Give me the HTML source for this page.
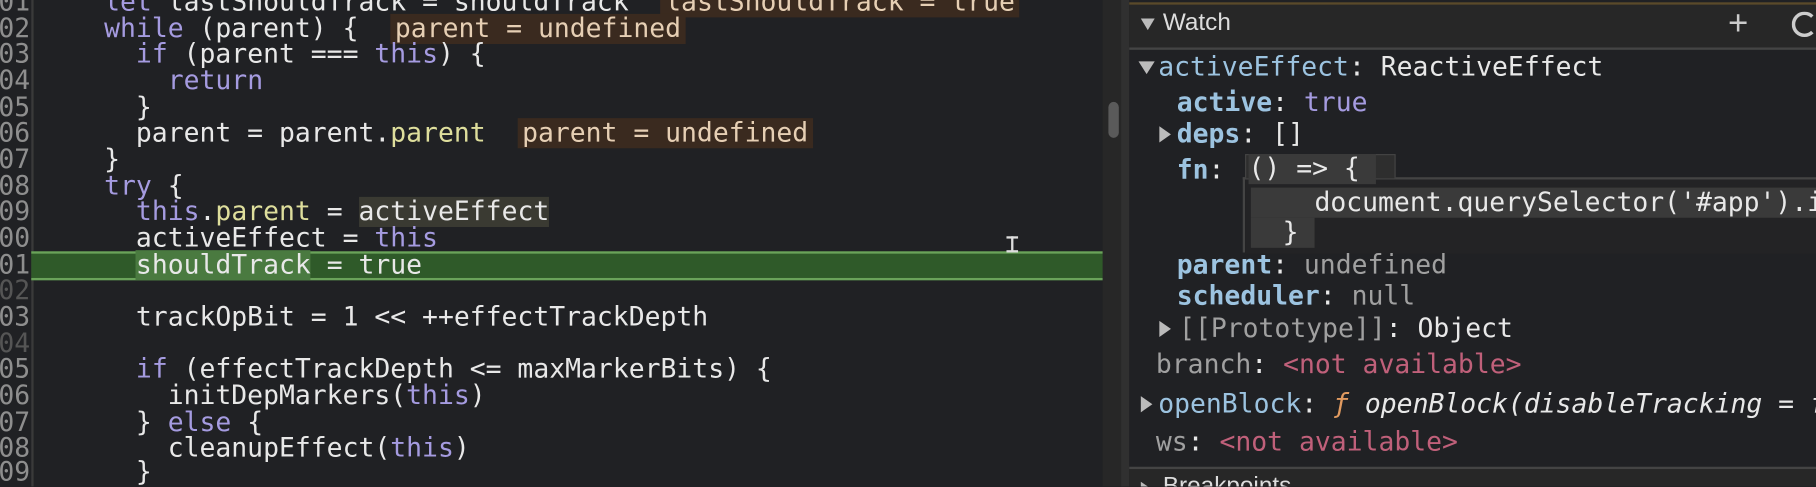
<!DOCTYPE html>
<html><head><meta charset="utf-8"><style>
*{margin:0;padding:0;box-sizing:border-box}
html,body{width:1816px;height:487px;overflow:hidden;background:#202124}
#w{position:absolute;left:0;top:0;width:1568px;height:420px;transform:scale(1.1582);transform-origin:0 0;overflow:hidden;background:#202124;font-family:"DejaVu Sans Mono","Liberation Mono",monospace;font-size:22.8px;color:#e8e8e8}
.ln{position:absolute;left:-6px;width:32px;text-align:right;color:#8e8e8e;height:23px;line-height:23px}
.cl{position:absolute;left:35px;white-space:pre;height:23px;line-height:23px}
.k{color:#a59be0}.p{color:#dede9c}.an{background:#3a2a1f;color:#e6cfb4;padding:0 4px}
.gut{position:absolute;left:27px;top:0;width:2px;height:420px;background:#3a3a3a}
.green{position:absolute;left:27px;top:217px;width:926px;height:25px;background:#2f5a29;border-top:2px solid #6aa35a;border-bottom:2px solid #6aa35a}
.sb{position:absolute;left:952px;top:0;width:18px;height:420px;background:#272727}
.thumb{position:absolute;left:957px;top:88px;width:9px;height:31px;background:#5a5a5a;border-radius:5px}
.div{position:absolute;left:968px;top:0;width:7px;height:420px;background:#303030}
.rp{position:absolute;left:975px;top:0;width:593px;height:420px;background:#202124}
.hdr{position:absolute;left:975px;top:2px;width:593px;height:41px;background:#272727;border-bottom:2px solid #444;border-top:2px solid #5a4a2a}
.rr{position:absolute;white-space:pre;height:26px;line-height:26px}
.pn{color:#9cc3e0;font-weight:bold}.nm{color:#9cc3e0}.g{color:#a0a0a0}.na{color:#c0607a}
.tri{position:absolute;width:0;height:0}
</style></head><body><div id="w">
<div class="gut"></div>
<div class="green"></div>
<div class="ln" style="top:-9px">01</div>
<div class="ln" style="top:14px">02</div>
<div class="ln" style="top:36px">03</div>
<div class="ln" style="top:59px">04</div>
<div class="ln" style="top:82px">05</div>
<div class="ln" style="top:104px">06</div>
<div class="ln" style="top:127px">07</div>
<div class="ln" style="top:150px">08</div>
<div class="ln" style="top:172px">09</div>
<div class="ln" style="top:195px">00</div>
<div class="ln" style="top:218px">01</div>
<div class="ln" style="top:240px;color:#555">02</div>
<div class="ln" style="top:263px">03</div>
<div class="ln" style="top:286px;color:#555">04</div>
<div class="ln" style="top:308px">05</div>
<div class="ln" style="top:331px">06</div>
<div class="ln" style="top:354px">07</div>
<div class="ln" style="top:376px">08</div>
<div class="ln" style="top:397px">09</div>

<div class="cl" style="top:-9px">    <span class="k">let</span> lastShouldTrack = shouldTrack  <span class="an">lastShouldTrack = true</span></div>
<div class="cl" style="top:14px">    <span class="k">while</span> (parent) {  <span class="an">parent = undefined</span></div>
<div class="cl" style="top:36px">      <span class="k">if</span> (parent === <span class="k">this</span>) {</div>
<div class="cl" style="top:59px">        <span class="k">return</span></div>
<div class="cl" style="top:82px">      }</div>
<div class="cl" style="top:104px">      parent = parent.<span class="p">parent</span>  <span class="an">parent = undefined</span></div>
<div class="cl" style="top:127px">    }</div>
<div class="cl" style="top:150px">    <span class="k">try</span> {</div>
<div class="cl" style="top:172px">      <span class="k">this</span>.<span class="p">parent</span> = <span style="background:#3a3a32">activeEffect</span></div>
<div class="cl" style="top:195px">      activeEffect = <span class="k">this</span></div>
<div class="cl" style="top:218px">      <span style="background:#4a7a40">shouldTrack</span> = true</div>
<div class="cl" style="top:263px">      trackOpBit = 1 &lt;&lt; ++effectTrackDepth</div>
<div class="cl" style="top:308px">      <span class="k">if</span> (effectTrackDepth &lt;= maxMarkerBits) {</div>
<div class="cl" style="top:331px">        initDepMarkers(<span class="k">this</span>)</div>
<div class="cl" style="top:354px">      } <span class="k">else</span> {</div>
<div class="cl" style="top:376px">        cleanupEffect(<span class="k">this</span>)</div>
<div class="cl" style="top:397px">      }</div>
<div style="position:absolute;left:873px;top:204px;width:2px;height:14px;background:#ddd"></div>
<div style="position:absolute;left:869px;top:204px;width:10px;height:2px;background:#ddd"></div>
<div style="position:absolute;left:869px;top:216px;width:10px;height:2px;background:#ddd"></div>

<div class="sb"></div><div class="thumb"></div><div class="div"></div>
<div class="rp"></div>
<div class="hdr"></div>
<div class="tri" style="left:985px;top:16px;border-left:6px solid transparent;border-right:6px solid transparent;border-top:10px solid #bbb"></div>
<div style="position:absolute;left:1004px;top:5px;font-family:'Liberation Sans',sans-serif;font-size:21px;line-height:30px;color:#ddd">Watch</div>
<div style="position:absolute;left:1492px;top:1px;font-family:'Liberation Sans',sans-serif;font-size:30px;line-height:40px;color:#ccc">+</div>
<div style="position:absolute;left:1547px;top:10px;width:22px;height:22px;border:3px solid #ccc;border-right-color:transparent;border-radius:50%"></div>

<div class="tri" style="left:983px;top:53px;border-left:7px solid transparent;border-right:7px solid transparent;border-top:11px solid #bbb"></div>
<div class="rr" style="left:1000px;top:45px"><span class="nm">activeEffect</span>: ReactiveEffect</div>
<div class="rr" style="left:1016px;top:76px"><span class="pn">active</span>: <span class="k">true</span></div>
<div class="tri" style="left:1001px;top:109px;border-top:7px solid transparent;border-bottom:7px solid transparent;border-left:10px solid #bbb"></div>
<div class="rr" style="left:1016px;top:103px"><span class="pn">deps</span>: []</div>
<div class="rr" style="left:1016px;top:134px"><span class="pn">fn</span>:</div>
<div style="position:absolute;left:1073px;top:153px;width:495px;height:65px;border-left:2px solid #444;border-top:2px solid #444;background:#1f1f21"></div>
<div style="position:absolute;left:1075px;top:133px;width:130px;height:22px;background:#2e2e2e;border:1px solid #444"></div>
<div style="position:absolute;left:1075px;top:155px;width:493px;height:64px;background:#232325"></div>
<div class="rr" style="left:1078px;top:133px;background:#3a3a3a">() =&gt; { </div>
<div class="rr" style="left:1080px;top:162px;background:#3a3a3a">    document.querySelector('#app').innerHTML</div>
<div class="rr" style="left:1080px;top:188px;background:#3a3a3a">  } </div>
<div class="rr" style="left:1016px;top:216px"><span class="pn">parent</span>: <span class="g">undefined</span></div>
<div class="rr" style="left:1016px;top:243px"><span class="pn">scheduler</span>: <span class="g">null</span></div>
<div class="tri" style="left:1001px;top:277px;border-top:7px solid transparent;border-bottom:7px solid transparent;border-left:10px solid #bbb"></div>
<div class="rr" style="left:1018px;top:271px"><span class="g">[[Prototype]]</span>: Object</div>
<div class="rr" style="left:998px;top:302px"><span class="g">branch</span>: <span class="na">&lt;not available&gt;</span></div>
<div class="tri" style="left:985px;top:342px;border-top:7px solid transparent;border-bottom:7px solid transparent;border-left:10px solid #bbb"></div>
<div class="rr" style="left:1000px;top:336px"><span class="nm">openBlock</span>: <i style="color:#e09a60">ƒ</i> <i>openBlock(disableTracking = false)</i></div>
<div class="rr" style="left:998px;top:369px"><span class="g">ws</span>: <span class="na">&lt;not available&gt;</span></div>
<div style="position:absolute;left:975px;top:403px;width:593px;height:17px;background:#272727;border-top:2px solid #444;overflow:hidden">
<div class="tri" style="left:10px;top:11px;border-top:6px solid transparent;border-bottom:6px solid transparent;border-left:9px solid #bbb"></div>
<div style="position:absolute;left:29px;top:2px;font-family:'Liberation Sans',sans-serif;font-size:21px;line-height:26px;color:#ddd;white-space:nowrap">Breakpoints</div>
</div>
</div></body></html>
